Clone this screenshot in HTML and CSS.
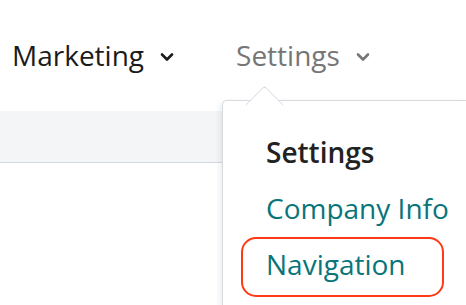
FILE: index.html
```html
<!DOCTYPE html>
<html lang="en">
<head>
  <meta charset="UTF-8" />
  <title>Settings menu</title>
  <link rel="stylesheet" href="styles.css">
</head>
<body>
  <nav class="topnav">
    <div class="nav-item">
      Marketing
      <svg class="chev" viewBox="0 0 14 10" width="14" height="10"><path d="M2 2.5 L7 7.5 L12 2.5" /></svg>
    </div>
    <div class="nav-item nav-item--open">
      Settings
      <svg class="chev" viewBox="0 0 14 10" width="14" height="10"><path d="M2 2.5 L7 7.5 L12 2.5" /></svg>
    </div>
  </nav>

  <div class="band"></div>

  <div class="dropdown">
    <div class="dropdown-title">Settings</div>
    <a class="dropdown-link" href="#">Company Info</a>
    <a class="dropdown-link dropdown-link--marked" href="#">Navigation</a>
  </div>
</body>
</html>
```

FILE: styles.css
```css
body {
  margin: 0;
  font-family: 'Open Sans', 'Noto Sans', sans-serif;
  background: #ffffff;
  height: 305px;
  overflow: hidden;
  position: relative;
}

.topnav {
  display: flex;
  gap: 62px;
  padding: 39px 0 0 12px;
  height: 71px;
  box-sizing: border-box;
}

.nav-item {
  display: flex;
  align-items: center;
  gap: 16px;
  font-size: 28px;
  line-height: 32px;
  color: #1b1b1b;
}

.nav-item .chev {
  fill: none;
  stroke: #1b1b1b;
  stroke-width: 2.6;
  stroke-linecap: round;
  stroke-linejoin: round;
  margin-top: 4px;
}

.nav-item--open {
  color: #767676;
}

.nav-item--open .chev {
  stroke: #767676;
}

.band {
  margin-top: 40px;
  height: 51px;
  background: #f4f5f7;
  border-bottom: 1px solid #d4d8dd;
}

.dropdown {
  position: absolute;
  left: 222px;
  right: 0;
  top: 100px;
  bottom: 0;
  background: #ffffff;
  border: 1px solid #d6dbe0;
  border-right: none;
  border-bottom: none;
  border-top-left-radius: 5px;
  box-shadow: -2px 2px 6px rgba(0, 0, 0, 0.08);
  padding: 31px 0 0 43px;
  display: flex;
  flex-direction: column;
  align-items: flex-start;
}

.dropdown::before {
  content: "";
  position: absolute;
  left: 28px;
  top: -10px;
  width: 26px;
  height: 26px;
  background: #ffffff;
  border-top: 1px solid #d6dbe0;
  border-left: 1px solid #d6dbe0;
  border-top-left-radius: 3px;
  transform: rotate(45deg);
}

.dropdown-title {
  position: relative;
  font-size: 28px;
  font-weight: 600;
  color: #222222;
  line-height: 40px;
}

.dropdown-link {
  position: relative;
  font-size: 28px;
  line-height: 40px;
  color: #09757a;
  text-decoration: none;
  margin-top: 16px;
}

.dropdown-link--marked::after {
  content: "";
  position: absolute;
  left: -25px;
  right: -38px;
  top: -7px;
  bottom: -13px;
  border: 2.5px solid #ff3a14;
  border-radius: 15px;
}
```
